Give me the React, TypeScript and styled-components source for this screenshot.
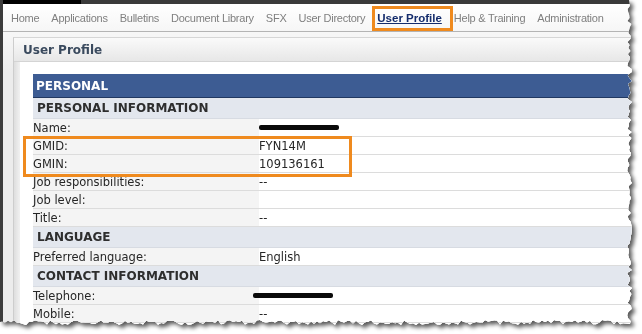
import React from 'react'
import styled, { createGlobalStyle } from 'styled-components'

const GlobalStyle = createGlobalStyle`
    html, body {
        margin: 0;
        padding: 0;
        background: #ffffff;
    }
    body {
        font-family: "DejaVu Sans", Verdana, sans-serif;
    }
`

// torn paper edge on the right and bottom, a fixed pseudo random walk
const tornEdge = (() => {
    let seed = 7
    const rnd = () => {
        seed = (seed * 9301 + 49297) % 233280
        return seed / 233280
    }
    const pts: string[] = ['0px 0px', '629px 0px']
    for (let y = 3; y < 322; y += 3) {
        pts.push(`${(627 + rnd() * 5).toFixed(1)}px ${y}px`)
    }
    pts.push('630px 324px')
    for (let x = 626; x > 0; x -= 3) {
        pts.push(`${x}px ${(320 + rnd() * 5).toFixed(1)}px`)
    }
    pts.push('0px 322px')
    return `polygon(${pts.join(', ')})`
})()

const Shadow = styled.div`
    width: 642px;
    height: 334px;
    overflow: hidden;
    filter: drop-shadow(3px 3px 2px rgba(0, 0, 0, 0.65));
`

const Screen = styled.div`
    width: 634px;
    height: 328px;
    clip-path: ${tornEdge};
    background: #efefef;
    border-left: 3px solid #3c3c3c;
    box-sizing: border-box;
    display: flex;
    flex-direction: column;
    overflow: hidden;
`

const TopBar = styled.div`
    height: 4px;
    flex: none;
    background: linear-gradient(to right, #000 78px, #3a3a3a 78px);
`

const NavBar = styled.div`
    height: 27px;
    flex: none;
    display: flex;
    align-items: center;
    gap: 12px;
    padding-left: 8px;
    background: linear-gradient(#ffffff, #f6f6f6);
    border-bottom: 1px solid #b4b4b4;
    font-family: "Liberation Sans", Arial, sans-serif;
    font-size: 11px;
    white-space: nowrap;
`

const NavItem = styled.span<{ $active?: boolean }>`
    position: relative;
    color: ${p => (p.$active ? '#142c6c' : '#7f7f7f')};
    font-weight: ${p => (p.$active ? 'bold' : 'normal')};
    font-size: ${p => (p.$active ? '11.5px' : '11px')};
    text-decoration: ${p => (p.$active ? 'underline' : 'none')};
    letter-spacing: ${p => (p.$active ? '0' : '-0.25px')};

    ${p =>
        p.$active &&
        `
        &::after {
            content: '';
            position: absolute;
            left: -5px;
            top: -6px;
            width: 75px;
            height: 19px;
            border: 3px solid #ef8a1e;
        }
    `}
`

const PageArea = styled.div`
    flex: 1;
    padding: 5px 0 0 10px;
    background: linear-gradient(#f7f7f7, #ececec 40px);
`

const Panel = styled.div`
    width: 640px;
    height: 100%;
    border-left: 1px solid #cdcdcd;
    border-top: 1px solid #d6d6d6;
    background: linear-gradient(to right, #dedede, #f1f1f1 6px);
    display: flex;
    flex-direction: column;
`

const PanelHeader = styled.div`
    height: 23px;
    flex: none;
    display: flex;
    align-items: center;
    padding-left: 9px;
    background: linear-gradient(#fafafa, #e7e7e7);
    border-bottom: 1px solid #d4d4d4;
    font-size: 12px;
    font-weight: bold;
    color: #3a4a5e;
`

const PanelBody = styled.div`
    flex: 1;
    margin-left: 6px;
    background: #ffffff;
    padding: 12px 0 0 13px;
`

const Table = styled.div`
    display: flex;
    flex-direction: column;
`

const SectionHeader = styled.div`
    height: 23px;
    display: flex;
    align-items: center;
    padding-left: 3px;
    background: #3d5c93;
    border-bottom: 1px solid #213861;
    color: #ffffff;
    font-size: 12px;
    font-weight: bold;
`

const SubHeader = styled.div`
    height: 20px;
    display: flex;
    align-items: center;
    padding-left: 4px;
    background: #e3e7ee;
    border-bottom: 1px solid #d7dbe2;
    color: #2e2e2e;
    font-size: 12px;
    font-weight: bold;
`

const Row = styled.div`
    height: 17px;
    display: grid;
    grid-template-columns: 226px 1fr;
    border-bottom: 1px solid #dcdcdc;
    font-size: 11.5px;
    color: #262626;
`

const Label = styled.div`
    display: flex;
    align-items: center;
    background: #f4f4f4;
`

const Value = styled.div`
    display: flex;
    align-items: center;
    background: #ffffff;
`

const Scribble = styled.span<{ $shift?: number }>`
    display: inline-block;
    width: 80px;
    height: 5px;
    margin-left: ${p => p.$shift || 0}px;
    background: #0a0a0a;
    border-radius: 2px;
`

const Highlight = styled.div`
    position: relative;

    &::after {
        content: '';
        position: absolute;
        left: -10px;
        top: -1px;
        width: 323px;
        height: 35px;
        border: 3px solid #ef8a1e;
        pointer-events: none;
    }
`

const navItems = [
    'Home',
    'Applications',
    'Bulletins',
    'Document Library',
    'SFX',
    'User Directory',
    'User Profile',
    'Help & Training',
    'Administration',
]

const Field = ({ label, children }: { label: string; children?: React.ReactNode }) => (
    <Row>
        <Label>{label}</Label>
        <Value>{children}</Value>
    </Row>
)

export default function App() {
    return (
        <>
            <GlobalStyle />
            <Shadow>
                <Screen>
                    <TopBar />
                    <NavBar>
                        {navItems.map(item => (
                            <NavItem key={item} $active={item === 'User Profile'}>
                                {item}
                            </NavItem>
                        ))}
                    </NavBar>
                    <PageArea>
                        <Panel>
                            <PanelHeader>User Profile</PanelHeader>
                            <PanelBody>
                                <Table>
                                    <SectionHeader>PERSONAL</SectionHeader>
                                    <SubHeader>PERSONAL INFORMATION</SubHeader>
                                    <Field label="Name:">
                                        <Scribble />
                                    </Field>
                                    <Highlight>
                                        <Field label="GMID:">FYN14M</Field>
                                        <Field label="GMIN:">109136161</Field>
                                    </Highlight>
                                    <Field label="Job responsibilities:">--</Field>
                                    <Field label="Job level:" />
                                    <Field label="Title:">--</Field>
                                    <SubHeader>LANGUAGE</SubHeader>
                                    <Field label="Preferred language:">English</Field>
                                    <SubHeader>CONTACT INFORMATION</SubHeader>
                                    <Field label="Telephone:">
                                        <Scribble $shift={-6} />
                                    </Field>
                                    <Field label="Mobile:">--</Field>
                                </Table>
                            </PanelBody>
                        </Panel>
                    </PageArea>
                </Screen>
            </Shadow>
        </>
    )
}
